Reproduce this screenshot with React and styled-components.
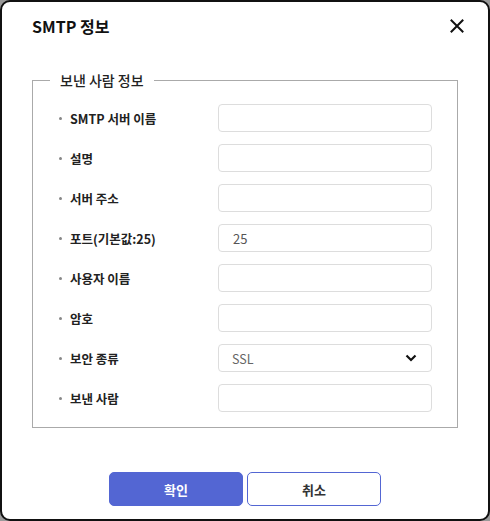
import React from "react";
import styled, { createGlobalStyle } from "styled-components";

const GlobalStyle = createGlobalStyle`
  html, body {
    margin: 0;
    padding: 0;
    background: #9a9a9a;
  }
  * {
    box-sizing: border-box;
  }
`;

const fields = [
  { label: "SMTP 서버 이름", value: "" },
  { label: "설명", value: "" },
  { label: "서버 주소", value: "" },
  { label: "포트(기본값:25)", value: "25" },
  { label: "사용자 이름", value: "" },
  { label: "암호", value: "", type: "password" },
  { label: "보안 종류", value: "SSL", select: true },
  { label: "보낸 사람", value: "" },
];

export default function App() {
  return (
    <>
      <GlobalStyle />
      <Dialog>
        <Header>
          <Title>SMTP 정보</Title>
          <CloseButton aria-label="닫기">
            <svg width="14" height="14" viewBox="0 0 14 14">
              <path
                d="M1.5 1.5 L12.5 12.5 M12.5 1.5 L1.5 12.5"
                stroke="#111"
                strokeWidth="2"
                strokeLinecap="square"
              />
            </svg>
          </CloseButton>
        </Header>
        <Group>
          <Legend>보낸 사람 정보</Legend>
          <Rows>
            {fields.map((f) => (
              <Row key={f.label}>
                <Label>{f.label}</Label>
                {f.select ? (
                  <SelectBox>
                    <span>{f.value}</span>
                    <svg width="12" height="8" viewBox="0 0 12 8">
                      <path
                        d="M1.5 1.5 L6 6 L10.5 1.5"
                        stroke="#111"
                        strokeWidth="2.2"
                        fill="none"
                      />
                    </svg>
                  </SelectBox>
                ) : (
                  <Input type={f.type || "text"} defaultValue={f.value} />
                )}
              </Row>
            ))}
          </Rows>
        </Group>
        <Footer>
          <Button primary>확인</Button>
          <Button>취소</Button>
        </Footer>
      </Dialog>
    </>
  );
}

const Dialog = styled.div`
  width: 490px;
  height: 521px;
  background: #ffffff;
  border: 2px solid #111111;
  border-radius: 10px;
  padding: 12px 30px 0 30px;
  font-family: "Noto Sans CJK KR", "Noto Sans", sans-serif;
  color: #222;
`;

const Header = styled.div`
  display: flex;
  flex-direction: row;
  justify-content: space-between;
  align-items: center;
  height: 24px;
`;

const Title = styled.h1`
  margin: 0;
  font-size: 16px;
  font-weight: 700;
  line-height: 24px;
  color: #111;
`;

const CloseButton = styled.button`
  display: flex;
  align-items: center;
  justify-content: center;
  border: none;
  background: transparent;
  padding: 0;
  margin-right: -9px;
  width: 20px;
  height: 20px;
  cursor: pointer;
`;

const Group = styled.fieldset`
  margin: 32px 0 0 0;
  padding: 14px 25px 15px 26px;
  border: 1px solid #aaaaaa;
  min-width: 0;
`;

const Legend = styled.legend`
  margin-left: -9px;
  padding: 0 10px;
  font-size: 14px;
  font-weight: 500;
  line-height: 20px;
  color: #222;
`;

const Rows = styled.div`
  display: flex;
  flex-direction: column;
  gap: 12px;
`;

const Row = styled.div`
  display: grid;
  grid-template-columns: 159px 214px;
  align-items: center;
`;

const Label = styled.div`
  position: relative;
  padding-left: 11px;
  font-size: 12.5px;
  font-weight: 700;
  color: #222;
  &::before {
    content: "";
    position: absolute;
    left: 0;
    top: 50%;
    width: 3px;
    height: 3px;
    margin-top: -1px;
    border-radius: 50%;
    background: #888;
  }
`;

const Input = styled.input`
  width: 214px;
  height: 28px;
  border: 1px solid #dddddd;
  border-radius: 4px;
  padding: 0 14px;
  font-family: inherit;
  font-size: 13px;
  color: #555;
  outline: none;
`;

const SelectBox = styled.div`
  display: flex;
  flex-direction: row;
  justify-content: space-between;
  align-items: center;
  width: 214px;
  height: 28px;
  border: 1px solid #dddddd;
  border-radius: 4px;
  padding: 0 14px 0 13px;
  font-size: 12.5px;
  color: #666;
`;

const Footer = styled.div`
  display: flex;
  flex-direction: row;
  justify-content: center;
  gap: 4px;
  margin-top: 44px;
`;

const Button = styled.button`
  width: 134px;
  height: 34px;
  border-radius: 5px;
  border: 1px solid #5366d3;
  background: ${({ primary }) => (primary ? "#5366d3" : "#ffffff")};
  color: ${({ primary }) => (primary ? "#ffffff" : "#333")};
  font-family: inherit;
  font-size: 13px;
  font-weight: 700;
  cursor: pointer;
`;
